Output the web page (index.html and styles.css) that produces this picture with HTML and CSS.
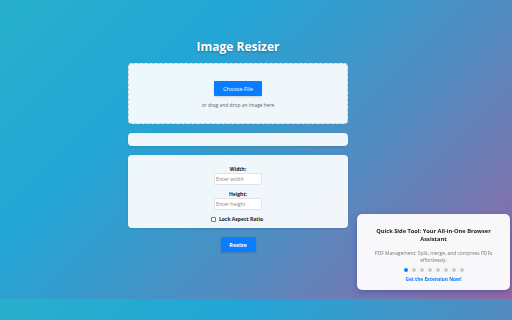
FILE: index.html
```html
<!DOCTYPE html>
<html lang="en">
<head>
  <meta charset="UTF-8">
  <meta name="viewport" content="width=device-width, initial-scale=1.0">
  <title>Image Resizer</title>
  <link rel="stylesheet" href="styles.css">
</head>
<body>
  <div class="container">
    <h1>Image Resizer</h1>

    <div class="upload-area">
      <button class="btn">Choose File</button>
      <p>or drag and drop an image here</p>
    </div>

    <div class="preview"></div>

    <div class="controls">
      <label class="field-label">Width:</label>
      <input type="number" class="size-input" placeholder="Enter width" />
      <label class="field-label">Height:</label>
      <input type="number" class="size-input" placeholder="Enter height" />
      <label class="lock">
        <input type="checkbox" />
        <span>Lock Aspect Ratio</span>
      </label>
    </div>

    <button class="btn resize-btn">Resize</button>
  </div>

  <div class="promo">
    <h3>Quick Side Tool: Your All-in-One Browser Assistant</h3>
    <p>PDF Management: Split, merge, and compress PDFs effortlessly.</p>
    <div class="dots">
      <span class="dot active"></span>
      <span class="dot"></span>
      <span class="dot"></span>
      <span class="dot"></span>
      <span class="dot"></span>
      <span class="dot"></span>
      <span class="dot"></span>
      <span class="dot"></span>
    </div>
    <a href="#" class="promo-link">Get the Extension Now!</a>
  </div>
</body>
</html>
```

FILE: styles.css
```css
body {
  font-family: "Open Sans", "Noto Sans", Arial, sans-serif;
  background: linear-gradient(135deg, #27b0cc 0%, #22a6d6 30%, #4f8dc2 62%, #9567a3 100%);
  margin: 0;
  padding: 39px 36px 47px 0;
  color: #333;
  font-size: 5px;
}
.container {
  width: 220px;
  margin: 0 auto;
  display: flex;
  flex-direction: column;
  align-items: stretch;
  text-align: center;
}
h1 {
  color: white;
  font-size: 12px;
  line-height: 16px;
  font-weight: 700;
  margin: 0 0 8px;
  text-shadow: 0 1px 2px rgba(0, 0, 0, 0.3);
}
.upload-area {
  background-color: rgba(255, 255, 255, 0.92);
  border: 1px dashed #c4ccd4;
  border-radius: 4px;
  padding: 17px 0 14px;
  display: flex;
  flex-direction: column;
  align-items: center;
}
.upload-area p {
  font-size: 4.9px;
  line-height: 7px;
  color: #666;
  margin: 6px 0 0;
}
.btn {
  display: block;
  background-color: #0a7cff;
  color: white;
  border: none;
  border-radius: 1px;
  width: 48px;
  height: 15px;
  padding: 0;
  font-family: inherit;
  font-size: 5.6px;
  cursor: pointer;
  box-shadow: 0 1px 2px rgba(0, 0, 0, 0.15);
}
.preview {
  margin-top: 9px;
  height: 13px;
  background-color: rgba(255, 255, 255, 0.92);
  border-radius: 4px;
  box-shadow: 0 1px 2px rgba(0, 0, 0, 0.12);
}
.controls {
  margin-top: 9px;
  height: 73px;
  box-sizing: border-box;
  padding-top: 11px;
  background-color: rgba(255, 255, 255, 0.92);
  border-radius: 4px;
  box-shadow: 0 1px 2px rgba(0, 0, 0, 0.12);
  display: flex;
  flex-direction: column;
  align-items: center;
}
.field-label {
  font-size: 5px;
  font-weight: 700;
  line-height: 7px;
  color: #222;
}
.size-input {
  width: 48px;
  height: 12px;
  box-sizing: border-box;
  margin: 0 0 6px;
  padding: 0 1px;
  border: 1px solid #e2e4e8;
  border-radius: 1px;
  background: white;
  font-family: inherit;
  font-size: 5.2px;
  outline: none;
}
.size-input::placeholder {
  color: #888;
}
.lock {
  display: flex;
  align-items: center;
  gap: 3px;
  font-size: 5px;
  line-height: 7px;
  font-weight: 700;
  color: #222;
  margin-left: -2px;
}
.lock input {
  appearance: none;
  width: 5px;
  height: 5px;
  margin: 0;
  border: 0.6px solid #777;
  border-radius: 1px;
  background: white;
}
.resize-btn {
  width: 35px;
  margin: 9px auto 0;
  font-weight: 700;
}
.promo {
  position: fixed;
  right: 2px;
  bottom: 30px;
  width: 153px;
  height: 76px;
  box-sizing: border-box;
  padding: 13px 6px 0;
  background-color: #f8f8fb;
  border-radius: 5px;
  box-shadow: 0 2px 6px rgba(40, 60, 160, 0.45);
  text-align: center;
}
.promo h3 {
  font-size: 5.7px;
  line-height: 8px;
  font-weight: 700;
  color: #222;
  margin: 0 6px;
}
.promo p {
  font-size: 4.9px;
  line-height: 7px;
  color: #777;
  margin: 7px 6px 0;
}
.dots {
  display: flex;
  justify-content: center;
  gap: 4px;
  margin-top: 4px;
}
.dot {
  width: 4px;
  height: 4px;
  border-radius: 50%;
  background-color: #ccc;
}
.dot.active {
  background-color: #0a7cff;
}
.promo-link {
  display: block;
  margin-top: 4px;
  font-size: 4.8px;
  line-height: 7px;
  font-weight: 700;
  color: #0a7cff;
  text-decoration: none;
}
```
